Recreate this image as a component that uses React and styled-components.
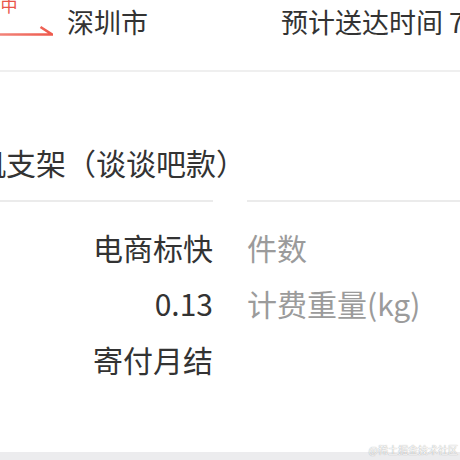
import React from 'react';
import styled, { createGlobalStyle } from 'styled-components';

const GlobalStyle = createGlobalStyle`
  html, body {
    margin: 0;
    padding: 0;
    width: 460px;
    height: 460px;
    overflow: hidden;
    background: #fff;
  }
  #root {
    width: 460px;
    height: 460px;
    overflow: hidden;
  }
`;

function App() {
  return (
    <>
      <GlobalStyle />
      <Screen>
        <Header>
          <Route>
            <Status>运输中</Status>
            <Arrow width="122" height="12" viewBox="0 0 122 12">
              <defs>
                <linearGradient id="arrowFill" x1="0" x2="1" y1="0" y2="0">
                  <stop offset="0" stopColor="#fbd3ce" />
                  <stop offset="0.55" stopColor="#f2857b" />
                  <stop offset="1" stopColor="#ee5a4d" />
                </linearGradient>
              </defs>
              <path
                d="M0 9.5 H121 L109.5 2"
                fill="none"
                stroke="url(#arrowFill)"
                strokeWidth="2.6"
              />
            </Arrow>
          </Route>
          <City>深圳市</City>
          <Eta>预计送达时间 7月13日</Eta>
        </Header>

        <TitleBlock>手机支架（谈谈吧款）</TitleBlock>

        <InfoGrid>
          <Column $align="right">
            <Cell>电商标快</Cell>
            <Cell>0.13</Cell>
            <Cell>寄付月结</Cell>
          </Column>
          <Column>
            <Cell $muted>件数</Cell>
            <Cell $muted>计费重量(kg)</Cell>
          </Column>
        </InfoGrid>

        <Spacer />
        <Band />
        <Watermark>@稀土掘金技术社区</Watermark>
      </Screen>
    </>
  );
}

/////////////////////////

const Screen = styled.div`
  position: relative;
  width: 640px;
  height: 460px;
  margin-left: -80px;
  display: flex;
  flex-direction: column;
  background: #fff;
  font-family: "Noto Sans CJK SC", "Noto Sans", sans-serif;
  color: #333;
`;

const Header = styled.div`
  display: flex;
  align-items: flex-start;
  height: 70px;
  padding-left: 11px;
  border-bottom: 2px solid #efefef;
`;

const Route = styled.div`
  width: 122px;
  display: flex;
  flex-direction: column;
  align-items: center;
`;

const Status = styled.div`
  font-size: 17px;
  line-height: 10px;
  color: #e9554a;
  white-space: nowrap;
`;

const Arrow = styled.svg`
  display: block;
  margin-top: 15px;
`;

const City = styled.div`
  width: 214px;
  margin-left: 14px;
  font-size: 27px;
  line-height: 44px;
  white-space: nowrap;
`;

const Eta = styled.div`
  font-size: 27px;
  line-height: 44px;
  white-space: nowrap;
`;

const TitleBlock = styled.div`
  padding: 70px 0 18px 26px;
  font-size: 30px;
  line-height: 40px;
  white-space: nowrap;
`;

const InfoGrid = styled.div`
  display: grid;
  grid-template-columns: 293px 313px;
  column-gap: 34px;
`;

const Column = styled.div`
  border-top: 2px solid #ebebeb;
  padding-top: 17px;
  text-align: ${(p) => (p.$align === 'right' ? 'right' : 'left')};
`;

const Cell = styled.div`
  font-size: 30px;
  line-height: 56px;
  white-space: nowrap;
  color: ${(p) => (p.$muted ? '#9b9b9b' : '#333')};
`;

const Spacer = styled.div`
  flex: 1;
`;

const Band = styled.div`
  height: 8px;
  background: #ececee;
`;

const Watermark = styled.div`
  position: absolute;
  right: 102px;
  bottom: 4px;
  font-size: 10px;
  line-height: 12px;
  color: rgba(255, 255, 255, 0.95);
  text-shadow: 0 0 1px rgba(0, 0, 0, 0.45);
  white-space: nowrap;
`;

export default App;
